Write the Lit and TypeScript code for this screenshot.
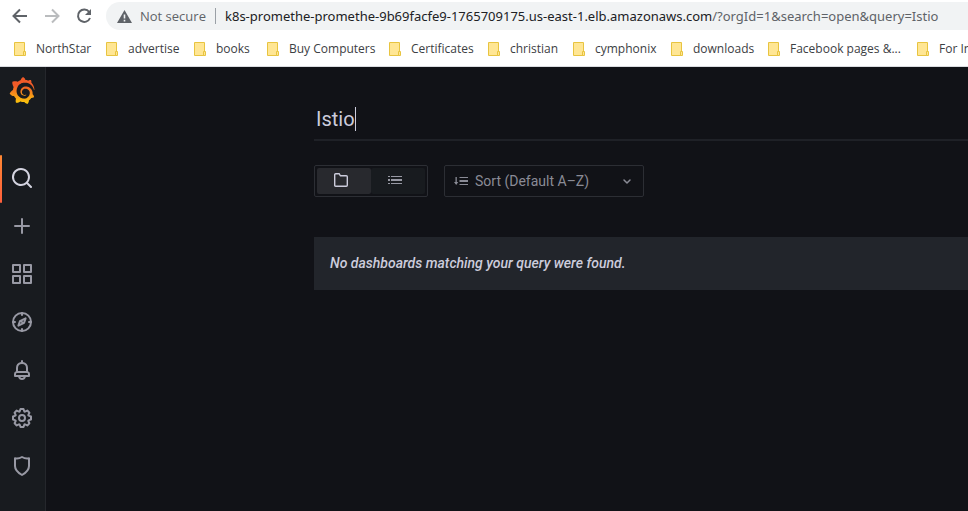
import { LitElement, html, svg, css } from "lit";
import { customElement } from "lit/decorators.js";

const LOGO =
  "M342,161.2c-0.6-6.1-1.6-13.1-3.6-20.9c-2-7.7-5-16.2-9.4-25c-4.4-8.8-10.1-17.9-17.5-26.8c-2.9-3.5-6.1-6.9-9.5-10.2c5.1-20.3-6.2-37.9-6.2-37.9c-19.5-1.2-31.9,6.1-36.5,9.4c-0.8-0.3-1.5-0.7-2.3-1c-3.3-1.3-6.7-2.6-10.3-3.7c-3.5-1.1-7.1-2.1-10.8-3c-3.7-0.9-7.4-1.6-11.2-2.2c-0.7-0.1-1.3-0.2-2-0.3c-8.5-27.2-32.9-38.6-32.9-38.6c-27.3,17.3-32.4,41.5-32.4,41.5s-0.1,0.5-0.3,1.4c-1.5,0.4-3,0.9-4.5,1.3c-2.1,0.6-4.2,1.4-6.2,2.2c-2.1,0.8-4.1,1.6-6.2,2.5c-4.1,1.8-8.2,3.8-12.2,6c-3.9,2.2-7.7,4.6-11.4,7.1c-0.5-0.2-1-0.4-1-0.4c-37.8-14.4-71.3,2.9-71.3,2.9c-3.1,40.2,15.1,65.5,18.7,70.1c-0.9,2.5-1.7,5-2.5,7.5c-2.8,9.1-4.9,18.4-6.2,28.1c-0.2,1.4-0.4,2.8-0.5,4.2C18.8,192.7,8.5,228,8.5,228c29.1,33.5,63.1,35.6,63.1,35.6c0,0,0.1-0.1,0.1-0.1c4.3,7.7,9.3,15,14.9,21.9c2.4,2.9,4.8,5.6,7.4,8.3c-10.6,30.4,1.5,55.6,1.5,55.6c32.4,1.2,53.7-14.2,58.2-17.7c3.2,1.1,6.5,2.1,9.8,2.9c10,2.6,20.2,4.1,30.4,4.5c2.5,0.1,5.1,0.2,7.6,0.1l1.2,0l0.8,0l1.6,0l1.6-0.1l0,0.1c15.3,21.8,42.1,24.9,42.1,24.9c19.1-20.1,20.2-40.1,20.2-44.4l0,0c0,0,0-0.1,0-0.3c0-0.4,0-0.6,0-0.6l0,0c0-0.3,0-0.6,0-0.9c4-2.8,7.8-5.8,11.4-9.1c7.6-6.9,14.3-14.8,19.9-23.3c0.5-0.8,1-1.6,1.5-2.4c21.6,1.2,36.9-13.4,36.9-13.4c-3.6-22.5-16.4-33.5-19.1-35.6l0,0c0,0-0.1-0.1-0.3-0.2c-0.2-0.1-0.2-0.2-0.2-0.2c0,0,0,0,0,0c-0.1-0.1-0.3-0.2-0.5-0.3c0.1-1.4,0.2-2.7,0.3-4.1c0.2-2.4,0.2-4.9,0.2-7.3l0-1.8l0-0.9l0-0.5c0-0.6,0-0.4,0-0.6l-0.1-1.5l-0.1-2c0-0.7-0.1-1.3-0.2-1.9c-0.1-0.6-0.1-1.3-0.2-1.9l-0.2-1.9l-0.3-1.9c-0.4-2.5-0.8-4.9-1.4-7.4c-2.3-9.7-6.1-18.9-11-27.2c-5-8.3-11.2-15.6-18.3-21.8c-7-6.2-14.9-11.2-23.1-14.9c-8.3-3.7-16.9-6.1-25.5-7.2c-4.3-0.6-8.6-0.8-12.9-0.7l-1.6,0l-0.4,0c-0.1,0-0.6,0-0.5,0l-0.7,0l-1.6,0.1c-0.6,0-1.2,0.1-1.7,0.1c-2.2,0.2-4.4,0.5-6.5,0.9c-8.6,1.6-16.7,4.7-23.8,9c-7.1,4.3-13.3,9.6-18.3,15.6c-5,6-8.9,12.7-11.6,19.6c-2.7,6.9-4.2,14.1-4.6,21c-0.1,1.7-0.1,3.5-0.1,5.2c0,0.4,0,0.9,0,1.3l0.1,1.4c0.1,0.8,0.1,1.7,0.2,2.5c0.3,3.5,1,6.9,1.9,10.1c1.9,6.5,4.9,12.4,8.6,17.4c3.7,5,8.2,9.1,12.9,12.4c4.7,3.2,9.8,5.5,14.8,7c5,1.5,10,2.1,14.7,2.1c0.6,0,1.2,0,1.7,0c0.3,0,0.6,0,0.9,0c0.3,0,0.6,0,0.9-0.1c0.5,0,1-0.1,1.5-0.1c0.1,0,0.3,0,0.4-0.1l0.5-0.1c0.3,0,0.6-0.1,0.9-0.1c0.6-0.1,1.1-0.2,1.7-0.3c0.6-0.1,1.1-0.2,1.6-0.4c1.1-0.2,2.1-0.6,3.1-0.9c2-0.7,4-1.5,5.7-2.4c1.8-0.9,3.4-2,5-3c0.4-0.3,0.9-0.6,1.3-1c1.6-1.3,1.9-3.7,0.6-5.3c-1.1-1.4-3.1-1.8-4.7-0.9c-0.4,0.2-0.8,0.4-1.2,0.6c-1.4,0.7-2.8,1.3-4.3,1.8c-1.5,0.5-3.1,0.9-4.7,1.2c-0.8,0.1-1.6,0.2-2.5,0.3c-0.4,0-0.8,0.1-1.3,0.1c-0.4,0-0.9,0-1.2,0c-0.4,0-0.8,0-1.2,0c-0.5,0-1,0-1.5-0.1l-0.6,0c-0.2,0-0.5,0-0.7-0.1c-0.5-0.1-0.9-0.1-1.4-0.2c-3.7-0.5-7.4-1.6-10.9-3.2c-3.6-1.6-7-3.8-10.1-6.6c-3.1-2.8-5.8-6.1-7.9-9.9c-2.1-3.8-3.6-8-4.3-12.4c-0.3-2.2-0.5-4.5-0.4-6.7c0-0.6,0.1-1.2,0.1-1.8l0-0.8c0-0.3,0.1-0.6,0.1-0.9c0.1-1.2,0.3-2.4,0.5-3.6c1.7-9.6,6.5-19,13.9-26.1c1.9-1.8,3.9-3.4,6-4.9c2.1-1.5,4.4-2.8,6.8-3.9c2.4-1.1,4.8-2,7.4-2.7c2.5-0.7,5.1-1.1,7.8-1.4c1.3-0.1,2.6-0.2,4-0.2c0.4,0,0.6,0,0.9,0l1.1,0l0.7,0l0.4,0l1.1,0.1c2.9,0.2,5.7,0.6,8.5,1.3c5.6,1.2,11.1,3.3,16.2,6.1c10.2,5.7,18.9,14.5,24.2,25.1c2.7,5.3,4.6,11,5.5,16.9c0.2,1.5,0.4,3,0.5,4.5l0.1,1.1l0.1,1.1c0,0.4,0,0.8,0,1.1c0,0.4,0,0.8,0,1.1l0,1l0,1.1c0,0.7-0.1,1.9-0.1,2.6c-0.1,1.6-0.3,3.3-0.5,4.9c-0.2,1.6-0.5,3.2-0.8,4.8c-0.3,1.6-0.7,3.2-1.1,4.7c-0.8,3.1-1.8,6.2-3,9.3c-2.4,6-5.6,11.8-9.4,17.1c-7.7,10.6-18.2,19.2-30.2,24.7c-6,2.7-12.3,4.7-18.8,5.7c-3.2,0.6-6.5,0.9-9.8,1l-0.6,0l-0.5,0l-1.1,0l-1.6,0l-1.2,0c-1.8,0-3.5-0.1-5.3-0.3c-7-0.5-13.9-1.8-20.7-3.7c-6.7-1.9-13.2-4.6-19.4-7.8c-12.3-6.6-23.4-15.6-32-26.5c-4.3-5.4-8.1-11.3-11.2-17.4c-3.1-6.1-5.6-12.6-7.4-19.1c-1.8-6.6-2.9-13.3-3.4-20.1l-0.1-1.3l0-0.6l0-0.6l0-1.1l0-0.7l0-0.8l0-1.6l0-0.9c0-0.8,0-1.7,0-2.5c0.1-3.3,0.4-6.8,0.8-10.2c0.4-3.4,1-6.9,1.7-10.3c0.7-3.4,1.5-6.8,2.5-10.2c1.9-6.7,4.3-13.2,7.1-19.3c5.7-12.2,13.1-23.1,22-31.8c2.2-2.2,4.5-4.2,6.9-6.2c2.4-1.9,4.9-3.7,7.5-5.4c2.5-1.7,5.2-3.2,7.9-4.6c1.3-0.7,2.7-1.4,4.1-2c0.7-0.3,1.4-0.6,2.1-0.9c0.7-0.3,1.4-0.6,2.1-0.9c2.8-1.2,5.7-2.2,8.7-3.1c0.7-0.2,1.5-0.4,2.2-0.7c0.7-0.2,1.5-0.4,2.2-0.6c1.5-0.4,3-0.8,4.5-1.1c0.7-0.2,1.5-0.3,2.3-0.5c0.8-0.2,1.5-0.3,2.3-0.5c0.8-0.1,1.5-0.3,2.3-0.4l1.1-0.2l1.2-0.2c0.8-0.1,1.5-0.2,2.3-0.3c0.9-0.1,1.7-0.2,2.6-0.3c0.7-0.1,1.9-0.2,2.6-0.3c0.5-0.1,1.1-0.1,1.6-0.2l1.1-0.1l0.5-0.1l0.6,0c0.9-0.1,1.7-0.1,2.6-0.2l1.3-0.1l0.4,0l0.6,0c0.7,0,1.5-0.1,2.2-0.1c2.9-0.1,5.9-0.1,8.8,0c5.8,0.2,11.5,0.9,17,1.9c11.1,2.1,21.5,5.6,31,10.3c9.5,4.6,17.9,10.3,25.3,16.5c0.5,0.4,0.9,0.8,1.4,1.2c0.4,0.4,0.9,0.8,1.3,1.2c0.9,0.8,1.7,1.6,2.6,2.4c0.9,0.8,1.7,1.6,2.5,2.4c0.8,0.8,1.6,1.6,2.4,2.5c3.1,3.3,6,6.6,8.6,10c5.2,6.7,9.4,13.5,12.7,19.9c0.2,0.4,0.4,0.8,0.6,1.2c0.2,0.4,0.4,0.8,0.6,1.2c0.4,0.8,0.8,1.6,1.1,2.4c0.4,0.8,0.7,1.5,1.1,2.3c0.3,0.8,0.7,1.5,1,2.3c1.2,3,2.4,5.9,3.3,8.6c1.5,4.4,2.6,8.3,3.5,11.7c0.3,1.4,1.6,2.3,3,2.1c1.5-0.1,2.6-1.3,2.6-2.8C342.6,170.4,342.5,166.1,342,161.2z";

const ICONS = {
  search: svg`<path d="M21.71,20.29,18,16.61A9,9,0,1,0,16.61,18l3.68,3.68a1,1,0,0,0,1.42,0A1,1,0,0,0,21.71,20.29ZM11,18a7,7,0,1,1,7-7A7,7,0,0,1,11,18Z"/>`,
  plus: svg`<path d="M19,11H13V5a1,1,0,0,0-2,0v6H5a1,1,0,0,0,0,2h6v6a1,1,0,0,0,2,0V13h6a1,1,0,0,0,0-2Z"/>`,
  apps: svg`<path d="M10,13H3a1,1,0,0,0-1,1v7a1,1,0,0,0,1,1h7a1,1,0,0,0,1-1V14A1,1,0,0,0,10,13ZM9,20H4V15H9ZM21,2H14a1,1,0,0,0-1,1v7a1,1,0,0,0,1,1h7a1,1,0,0,0,1-1V3A1,1,0,0,0,21,2ZM20,9H15V4h5Zm1,4H14a1,1,0,0,0-1,1v7a1,1,0,0,0,1,1h7a1,1,0,0,0,1-1V14A1,1,0,0,0,21,13Zm-1,7H15V15h5ZM10,2H3A1,1,0,0,0,2,3v7a1,1,0,0,0,1,1h7a1,1,0,0,0,1-1V3A1,1,0,0,0,10,2ZM9,9H4V4H9Z"/>`,
  compass: svg`<g fill="none" stroke="currentColor" stroke-width="2" stroke-linecap="round" stroke-linejoin="round"><circle cx="12" cy="12" r="9"/><path d="M12 3v2M12 19v2M3 12h2M19 12h2M15.6 8.4l-1.5 4.4-5.7 2.8 1.5-4.4zM11.4 11.4l1.2 1.2"/></g>`,
  bell: svg`<path d="M18,13.18V10a6,6,0,0,0-5-5.91V3a1,1,0,0,0-2,0V4.09A6,6,0,0,0,6,10v3.18A3,3,0,0,0,4,16v2a1,1,0,0,0,1,1H8.14a4,4,0,0,0,7.72,0H19a1,1,0,0,0,1-1V16A3,3,0,0,0,18,13.18ZM8,10a4,4,0,0,1,8,0v3H8Zm4,10a2,2,0,0,1-1.72-1h3.44A2,2,0,0,1,12,20Zm6-3H6V16a1,1,0,0,1,1-1H17a1,1,0,0,1,1,1Z"/>`,
  cog: svg`<path d="M21.32,9.55l-1.89-.63.89-1.78A1,1,0,0,0,20.13,6L18,3.87a1,1,0,0,0-1.15-.19l-1.78.89-.63-1.89A1,1,0,0,0,13.5,2h-3a1,1,0,0,0-.95.68L8.92,4.57,7.14,3.68A1,1,0,0,0,6,3.87L3.87,6a1,1,0,0,0-.19,1.15l.89,1.78-1.89.63A1,1,0,0,0,2,10.5v3a1,1,0,0,0,.68.95l1.89.63-.89,1.78A1,1,0,0,0,3.87,18L6,20.13a1,1,0,0,0,1.15.19l1.78-.89.63,1.89a1,1,0,0,0,.95.68h3a1,1,0,0,0,.95-.68l.63-1.89,1.78.89A1,1,0,0,0,18,20.13L20.13,18a1,1,0,0,0,.19-1.15l-.89-1.78,1.89-.63A1,1,0,0,0,22,13.5v-3A1,1,0,0,0,21.32,9.55ZM20,12.78l-1.2.4A2,2,0,0,0,17.64,16l.57,1.14-1.1,1.1L16,17.64a2,2,0,0,0-2.79,1.16l-.4,1.2H11.22l-.4-1.2A2,2,0,0,0,8,17.64l-1.14.57-1.1-1.1L6.36,16A2,2,0,0,0,5.2,13.18L4,12.78V11.22l1.2-.4A2,2,0,0,0,6.36,8L5.79,6.89l1.1-1.1L8,6.36A2,2,0,0,0,10.82,5.2l.4-1.2h1.56l.4,1.2A2,2,0,0,0,16,6.36l1.14-.57,1.1,1.1L17.64,8a2,2,0,0,0,1.16,2.79l1.2.4ZM12,8a4,4,0,1,0,4,4A4,4,0,0,0,12,8Zm0,6a2,2,0,1,1,2-2A2,2,0,0,1,12,14Z"/>`,
  shield: svg`<path fill="none" stroke="currentColor" stroke-width="2" stroke-linejoin="round" d="M5 4.2c2.5.5 4.9 0 7-1.2 2.1 1.2 4.5 1.7 7 1.2v7.7c0 3.9-3 6.7-7 9.1-4-2.4-7-5.2-7-9.1z"/>`,
};

const NAV: { label: string; icon: keyof typeof ICONS; active?: boolean }[] = [
  { label: "Search dashboards", icon: "search", active: true },
  { label: "Create", icon: "plus" },
  { label: "Dashboards", icon: "apps" },
  { label: "Explore", icon: "compass" },
  { label: "Alerting", icon: "bell" },
  { label: "Configuration", icon: "cog" },
  { label: "Server admin", icon: "shield" },
];

const BOOKMARKS = [
  "NorthStar",
  "advertise",
  "books",
  "Buy Computers",
  "Certificates",
  "christian",
  "cymphonix",
  "downloads",
  "Facebook pages &...",
  "For Internet",
];

@customElement("browser-chrome")
class BrowserChrome extends LitElement {
  static styles = css`
    :host {
      display: block;
      background: #fff;
      border-bottom: 1px solid #dadce0;
      font-family: "Open Sans", "Noto Sans", sans-serif;
    }
    button {
      display: grid;
      place-items: center;
      width: 32px;
      height: 32px;
      padding: 0;
      border: 0;
      background: none;
      color: #5f6368;
    }
    button:disabled {
      color: #babcbe;
    }
    .toolbar {
      display: flex;
      align-items: center;
      height: 32px;
      padding-left: 4px;
      overflow: hidden;
    }
    .address {
      display: flex;
      flex: 1;
      align-items: center;
      min-width: 0;
      height: 28px;
      margin-left: 6px;
      padding-left: 11px;
      border-radius: 14px 0 0 14px;
      background: #f1f3f4;
      color: #5f6368;
      font-size: 13px;
      line-height: 20px;
      white-space: nowrap;
    }
    .warning {
      margin-right: 8px;
    }
    .security {
      width: 67px;
      margin-right: 8px;
    }
    .url {
      flex: 1;
      padding-left: 9px;
      border-left: 1px solid #9aa0a6;
      font-family: "Noto Sans", sans-serif;
      line-height: 16px;
      outline: 0;
    }
    .host {
      color: #202124;
    }
    .bookmarks {
      display: grid;
      grid-template-columns: 92px 88px 73px 122px 99px 85px 98px 97px 149px max-content;
      align-items: center;
      height: 34px;
      padding-left: 14px;
      overflow: hidden;
    }
    .bookmark {
      display: flex;
      align-items: center;
      gap: 10px;
      color: #3c4043;
      font-size: 12px;
      line-height: 16px;
      text-decoration: none;
      white-space: nowrap;
    }
  `;

  render() {
    return html`
      <div class="toolbar">
        <button aria-label="Back">
          <svg width="16" height="16" viewBox="0 0 16 16" fill="none" stroke="currentColor" stroke-width="2"><path d="M15 8H2M8 1.5 1.5 8 8 14.5"/></svg>
        </button>
        <button aria-label="Forward" disabled>
          <svg width="16" height="16" viewBox="0 0 16 16" fill="none" stroke="currentColor" stroke-width="2"><path d="M1 8h13M8 1.5 14.5 8 8 14.5"/></svg>
        </button>
        <button aria-label="Reload">
          <svg width="16" height="16" viewBox="0 0 16 16" fill="none" stroke="currentColor" stroke-width="2"><path d="M13.2 4A6.2 6.2 0 1 0 14 10"/><path d="M15 1v6H9z" fill="currentColor" stroke="none"/></svg>
        </button>
        <div class="address">
          <svg class="warning" width="15" height="13" viewBox="0 0 15 13" fill="currentColor"><path fill-rule="evenodd" d="M7.5 0 15 13H0zM6.7 4.5v4h1.6v-4zM6.7 9.8v1.6h1.6V9.8z"/></svg>
          <span class="security">Not secure</span>
          <div class="url" role="textbox" aria-label="Address" contenteditable="true" spellcheck="false"><span class="host">k8s-promethe-promethe-9b69facfe9-1765709175.us-east-1.elb.amazonaws.com</span><span>/?orgId=1&amp;search=open&amp;query=Istio</span></div>
        </div>
      </div>
      <nav class="bookmarks" aria-label="Bookmarks">
        ${BOOKMARKS.map(
          (name) => html`<a class="bookmark" href="#">
            <svg width="12" height="14" viewBox="0 0 12 14" fill="#ffe694" stroke="#e8c440"><path d="M.5.5h10v13H.5z"/><path d="M9.5 9.5h2v4h-2z"/></svg>
            ${name}</a>`,
        )}
      </nav>
    `;
  }
}

@customElement("side-menu")
class SideMenu extends LitElement {
  static styles = css`
    :host {
      display: flex;
      flex-direction: column;
      flex: none;
      width: 45px;
      border-right: 1px solid #25272c;
      background: #181b1f;
    }
    .home {
      display: block;
      height: 28px;
      padding: 10px 0 0 9px;
      margin-bottom: 50px;
    }
    .item {
      display: grid;
      place-items: center;
      box-sizing: border-box;
      height: 48px;
      padding: 0 1px 2px 0;
      color: #9899a4;
    }
    .active {
      position: relative;
      color: #d4d4e0;
    }
    .active::before {
      content: "";
      position: absolute;
      inset: 0 auto 0 0;
      width: 2px;
      border-radius: 2px;
      background: linear-gradient(#ff8833, #ff5f3c);
    }
  `;

  render() {
    return html`
      <a class="home" href="#" aria-label="Home">
        <svg width="26" height="27" viewBox="0 0 351 365">
          <linearGradient id="flame" gradientUnits="userSpaceOnUse" x1="175" y1="445" x2="175" y2="114">
            <stop offset="0" stop-color="#fff100"/>
            <stop offset="1" stop-color="#f05a28"/>
          </linearGradient>
          <path fill="url(#flame)" d=${LOGO}/>
        </svg>
      </a>
      ${NAV.map(
        (item) => html`<a class=${item.active ? "item active" : "item"} href="#" aria-label=${item.label}>
          <svg width="24" height="24" viewBox="0 0 24 24" fill="currentColor">${ICONS[item.icon]}</svg>
        </a>`,
      )}
    `;
  }
}

@customElement("dashboard-search")
class DashboardSearch extends LitElement {
  static styles = css`
    :host {
      display: block;
      flex: 1;
      min-width: 0;
      padding: 32px 0 32px 268px;
      background: #111217;
      color: #ccccdc;
      font-family: Roboto, sans-serif;
    }
    .query {
      display: flex;
      align-items: center;
      height: 40px;
      padding-left: 2px;
      border-bottom: 2px solid #1f2127;
    }
    .query input {
      field-sizing: content;
      padding: 0;
      border: 0;
      outline: 0;
      background: none;
      color: inherit;
      font: 20px/24px Roboto, sans-serif;
      caret-color: transparent;
    }
    .caret {
      width: 1px;
      height: 24px;
      background: #ccccdc;
    }
    .filters {
      display: flex;
      gap: 16px;
      margin: 24px 0 40px;
    }
    .layouts {
      display: flex;
      box-sizing: border-box;
      height: 32px;
      padding: 2px;
      border: 1px solid #2c2e34;
      border-radius: 2px;
    }
    .layout {
      display: grid;
      place-items: center;
      width: 54px;
      padding: 0 6px 2px 0;
      border: 0;
      border-radius: 2px;
      background: #181b1f;
      color: #9899a4;
    }
    .chosen {
      background: #28292e;
      color: #ccccdc;
    }
    .sort {
      display: grid;
      grid-template-columns: 16px 1fr 16px;
      align-items: center;
      gap: 6px;
      box-sizing: border-box;
      width: 200px;
      height: 32px;
      padding: 0 8px;
      border: 1px solid #2c2e34;
      border-radius: 2px;
      color: #8a8b96;
    }
    .sort select {
      appearance: none;
      min-width: 0;
      padding: 0;
      border: 0;
      outline: 0;
      background: none;
      color: inherit;
      font: 14px/20px Roboto, sans-serif;
    }
    .empty {
      margin: 0;
      padding: 16px;
      background: #22252b;
      font-size: 14px;
      font-style: italic;
      font-weight: 500;
      line-height: 21px;
    }
  `;

  render() {
    return html`
      <label class="query">
        <input type="text" aria-label="Search dashboards by name" .value=${"Istio"} />
        <span class="caret"></span>
      </label>
      <div class="filters">
        <div class="layouts" role="group" aria-label="Layout">
          <button class="layout chosen" aria-label="Folders" aria-pressed="true">
            <svg width="14" height="14" viewBox="0 0 14 14" fill="none" stroke="currentColor" stroke-width="1.4" stroke-linejoin="round"><path d="M1.7.7h3.600l1 2h6q1 0 1 1v8.600q0 1-1 1H1.700q-1 0-1-1V1.700q0-1 1-1z"/></svg>
          </button>
          <button class="layout" aria-label="List" aria-pressed="false">
            <svg width="14" height="10" viewBox="0 0 14 10" fill="currentColor"><path d="M0 1h2v1H0zM3 1h11v1H3zM0 4h2v2H0zM3 4h11v2H3zM0 8h2v1H0zM3 8h11v1H3z"/></svg>
          </button>
        </div>
        <div class="sort">
          <svg width="16" height="10" viewBox="0 0 16 10" fill="currentColor"><path d="M2.5 1h1.3v5h1.4L3.200 9 1 6h1.500zM6.500 1H15v1H6.500zM6.500 4H15v2H6.500zM6.500 8H15v1H6.500z"/></svg>
          <select aria-label="Sort">
            <option>Sort (Default A–Z)</option>
          </select>
          <svg width="16" height="16" viewBox="0 0 16 16" fill="none" stroke="currentColor" stroke-width="1.5" stroke-linecap="round" stroke-linejoin="round"><path d="M5 7l3 3 3-3"/></svg>
        </div>
      </div>
      <p class="empty">No dashboards matching your query were found.</p>
    `;
  }
}

@customElement("app-root")
class AppRoot extends LitElement {
  static styles = css`
    :host {
      display: flex;
      flex-direction: column;
      min-height: 100vh;
    }
    .workspace {
      display: flex;
      flex: 1;
    }
  `;

  render() {
    return html`
      <browser-chrome></browser-chrome>
      <div class="workspace">
        <side-menu></side-menu>
        <dashboard-search></dashboard-search>
      </div>
    `;
  }
}
